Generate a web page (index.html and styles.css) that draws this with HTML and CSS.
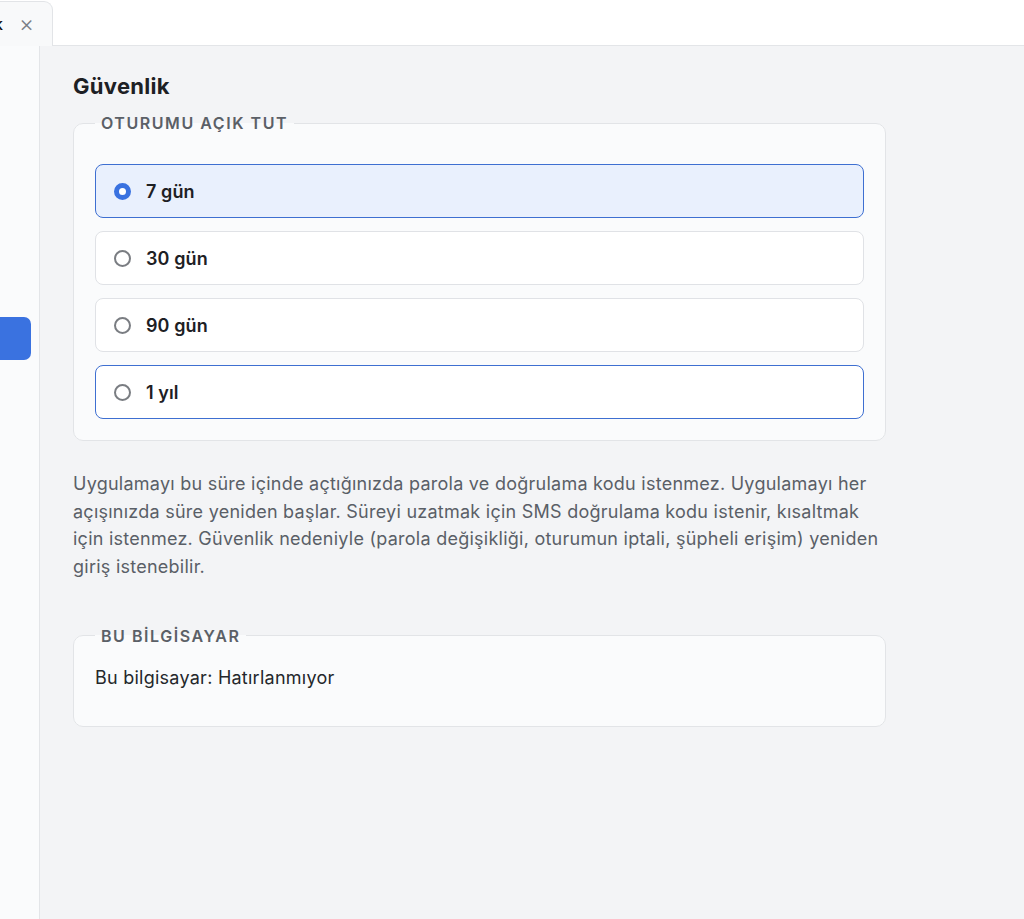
FILE: index.html
```html
<!DOCTYPE html>
<html lang="tr">
<head>
<meta charset="utf-8">
<title>Güvenlik</title>
<link rel="stylesheet" href="styles.css">
</head>
<body>
<div class="topbar">
  <div class="tab">
    <span class="tab-label">Güvenlik</span>
    <span class="tab-close">×</span>
  </div>
</div>
<div class="layout">
  <aside class="sidebar">
    <div class="side-btn"></div>
  </aside>
  <main class="main">
    <h1 class="title">Güvenlik</h1>
    <fieldset class="group">
      <legend class="legend">Oturumu açık tut</legend>
      <div class="options">
        <label class="option selected"><span class="radio on"></span><span class="opt-text">7 gün</span></label>
        <label class="option"><span class="radio"></span><span class="opt-text">30 gün</span></label>
        <label class="option"><span class="radio"></span><span class="opt-text">90 gün</span></label>
        <label class="option focused"><span class="radio"></span><span class="opt-text">1 yıl</span></label>
      </div>
    </fieldset>
    <p class="desc">Uygulamayı bu süre içinde açtığınızda parola ve doğrulama kodu istenmez. Uygulamayı her açışınızda süre yeniden başlar. Süreyi uzatmak için SMS doğrulama kodu istenir, kısaltmak için istenmez. Güvenlik nedeniyle (parola değişikliği, oturumun iptali, şüpheli erişim) yeniden giriş istenebilir.</p>
    <fieldset class="group group2">
      <legend class="legend">BU BİLGİSAYAR</legend>
      <p class="computer">Bu bilgisayar: Hatırlanmıyor</p>
    </fieldset>
  </main>
</div>
</body>
</html>
```
FILE: styles.css
```css
* { box-sizing: border-box; }
html, body { margin: 0; height: 100%; }
body {
  font-family: Inter, "Noto Sans", "Liberation Sans", sans-serif;
  background: #f3f4f6;
  color: #1f2328;
  display: flex;
  flex-direction: column;
  height: 919px;
  overflow: hidden;
}
.topbar {
  height: 46px;
  background: #ffffff;
  border-bottom: 1px solid #e3e5e8;
  display: flex;
  align-items: flex-end;
  flex: none;
}
.tab {
  width: 53px;
  height: 45px;
  background: #f8f9fa;
  border-right: 1px solid #e2e4e7;
  border-top: 1px solid #e2e4e7;
  border-top-right-radius: 9px;
  display: flex;
  justify-content: flex-end;
  align-items: center;
  overflow: hidden;
  padding-right: 18px;
  gap: 16px;
  margin-bottom: -1px;
}
.tab-label {
  font-size: 16px;
  font-weight: 500;
  color: #111;
  white-space: nowrap;
  flex: none;
}
.tab-close {
  font-size: 23px;
  font-weight: 300;
  color: #7a7f86;
  flex: none;
  line-height: 1;
}
.layout {
  flex: 1;
  display: flex;
  min-height: 0;
}
.sidebar {
  width: 40px;
  flex: none;
  background: #fafbfc;
  border-right: 1px solid #e3e5e8;
  padding-top: 271px;
}
.side-btn {
  width: 31px;
  height: 43px;
  background: #3a72e0;
  border-radius: 0 7px 7px 0;
}
.main {
  flex: 1;
  padding: 26px 0 0 33px;
}
.title {
  margin: 0;
  font-size: 22px;
  line-height: 28px;
  font-weight: 700;
  letter-spacing: 0.3px;
  color: #1d2024;
}
.group {
  width: 813px;
  margin: 13px 0 0 0;
  border: 1px solid #e2e4e7;
  border-radius: 10px;
  background: #fafbfc;
  padding: 31px 21px 21px 21px;
  min-width: 0;
}
.legend {
  padding: 0 6px;
  margin-left: 0;
  font-size: 16px;
  line-height: 20px;
  font-weight: 600;
  letter-spacing: 1.55px;
  text-transform: uppercase;
  color: #5b6067;
}
.options {
  display: flex;
  flex-direction: column;
  gap: 13px;
}
.option {
  height: 54px;
  display: flex;
  align-items: center;
  gap: 15px;
  padding-left: 18px;
  background: #ffffff;
  border: 1px solid #e0e2e6;
  border-radius: 8px;
}
.option.selected {
  background: #e9f0fd;
  border: 1.5px solid #3e6fd1;
}
.option.focused {
  border: 1.5px solid #3e6fd1;
}
.radio {
  width: 17px;
  height: 17px;
  border-radius: 50%;
  border: 2px solid #7a7d82;
  background: #ffffff;
  flex: none;
}
.radio.on {
  border: 5.5px solid #3a72e0;
  background: #ffffff;
}
.opt-text {
  font-size: 18px;
  font-weight: 600;
  letter-spacing: 0.1px;
  color: #1d2024;
}
.desc {
  width: 815px;
  margin: 29px 0 0 0;
  font-size: 18px;
  line-height: 27.7px;
  letter-spacing: 0.25px;
  color: #5a5f67;
}
.group2 {
  margin-top: 45px;
  padding: 12px 21px 28px 21px;
}
.computer {
  margin: 0;
  font-size: 18px;
  line-height: 40px;
  letter-spacing: 0.25px;
  color: #24272b;
}
```
